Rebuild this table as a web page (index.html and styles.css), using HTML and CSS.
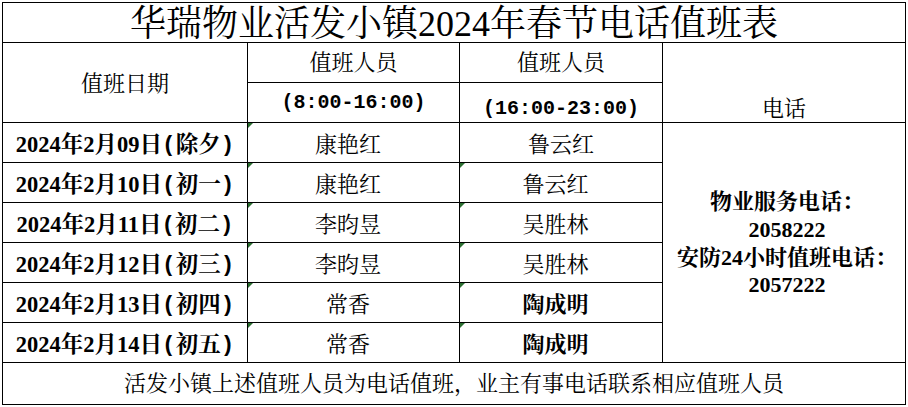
FILE: index.html
```html
<!DOCTYPE html>
<html lang="zh-CN">
<head>
<meta charset="utf-8">
<title>华瑞物业活发小镇2024年春节电话值班表</title>
<link rel="stylesheet" href="styles.css">
</head>
<body>
<div class="sheet">
  <div class="cell title">华瑞物业活发小镇2024年春节电话值班表</div>
  <div class="cell hdate">值班日期</div>
  <div class="cell hname">值班人员</div>
  <div class="cell hname">值班人员</div>
  <div class="cell htel">电话</div>
  <div class="cell htime">(8:00-16:00)</div>
  <div class="cell htime low">(16:00-23:00)</div>

  <div class="cell phone">
    <div>物业服务电话：</div>
    <div>2058222</div>
    <div>安防24小时值班电话：</div>
    <div>2057222</div>
  </div>

  <div class="cell date">2024年2月09日<span class="pr">(</span>除夕<span class="pr">)</span></div>
  <div class="cell name mark">康艳红</div>
  <div class="cell name first">鲁云红</div>

  <div class="cell date">2024年2月10日<span class="pr">(</span>初一<span class="pr">)</span></div>
  <div class="cell name mark">康艳红</div>
  <div class="cell name mark">鲁云红</div>

  <div class="cell date">2024年2月11日<span class="pr">(</span>初二<span class="pr">)</span></div>
  <div class="cell name mark">李昀昱</div>
  <div class="cell name mark">吴胜林</div>

  <div class="cell date">2024年2月12日<span class="pr">(</span>初三<span class="pr">)</span></div>
  <div class="cell name mark">李昀昱</div>
  <div class="cell name mark">吴胜林</div>

  <div class="cell date">2024年2月13日<span class="pr">(</span>初四<span class="pr">)</span></div>
  <div class="cell name mark">常香</div>
  <div class="cell name mark bold">陶成明</div>

  <div class="cell date">2024年2月14日<span class="pr">(</span>初五<span class="pr">)</span></div>
  <div class="cell name mark">常香</div>
  <div class="cell name mark bold">陶成明</div>

  <div class="cell foot">活发小镇上述值班人员为电话值班，业主有事电话联系相应值班人员</div>
</div>
</body>
</html>
```

FILE: styles.css
```css
html, body {
  margin: 0;
  padding: 0;
  background: #ffffff;
}

body {
  font-family: "Liberation Serif", "Noto Serif CJK SC", "Noto Sans CJK SC", serif;
  color: #000000;
  font-size: 22px;
}

.sheet {
  display: grid;
  grid-template-columns: 244px 211px 202px 242px;
  grid-template-rows: repeat(9, 39px) 41px;
  gap: 1px;
  padding: 1px;
  background: #000000;
  width: max-content;
  margin: 2px 0 0 2px;
}

.cell {
  background: #ffffff;
  display: flex;
  align-items: center;
  justify-content: center;
  line-height: 22px;
  white-space: nowrap;
  position: relative;
}

.title {
  grid-column: 1 / -1;
  font-size: 36px;
  line-height: 36px;
  align-items: flex-end;
}

.hdate {
  grid-column: 1;
  grid-row: 2 / span 2;
  padding-top: 2px;
}

.hname {
  padding-top: 1px;
}

.htime {
  font-family: "Liberation Mono", "Noto Sans CJK SC", monospace;
  font-size: 20px;
  font-weight: bold;
  padding-top: 1px;
}

.htime.low {
  align-items: flex-end;
  padding-bottom: 2px;
}

.htel {
  grid-column: 4;
  grid-row: 2 / span 2;
  align-items: flex-end;
  padding-bottom: 2px;
}

.phone {
  grid-column: 4;
  grid-row: 4 / span 6;
  flex-direction: column;
  font-weight: bold;
  line-height: 27.7px;
  padding-top: 2px;
  padding-left: 6px;
}

.date {
  grid-column: 1;
  font-weight: bold;
  font-size: 22.5px;
  padding-top: 4px;
}

.pr {
  font-family: "Liberation Mono", monospace;
}

.name {
  padding-top: 4px;
  padding-right: 11px;
}

.name.first {
  padding-right: 0;
}

.bold {
  font-weight: bold;
}

.mark::before {
  content: "";
  position: absolute;
  left: 0;
  top: 0;
  width: 0;
  height: 0;
  border-top: 5px solid #2a6e30;
  border-right: 5px solid transparent;
}

.foot {
  grid-column: 1 / -1;
}
```
